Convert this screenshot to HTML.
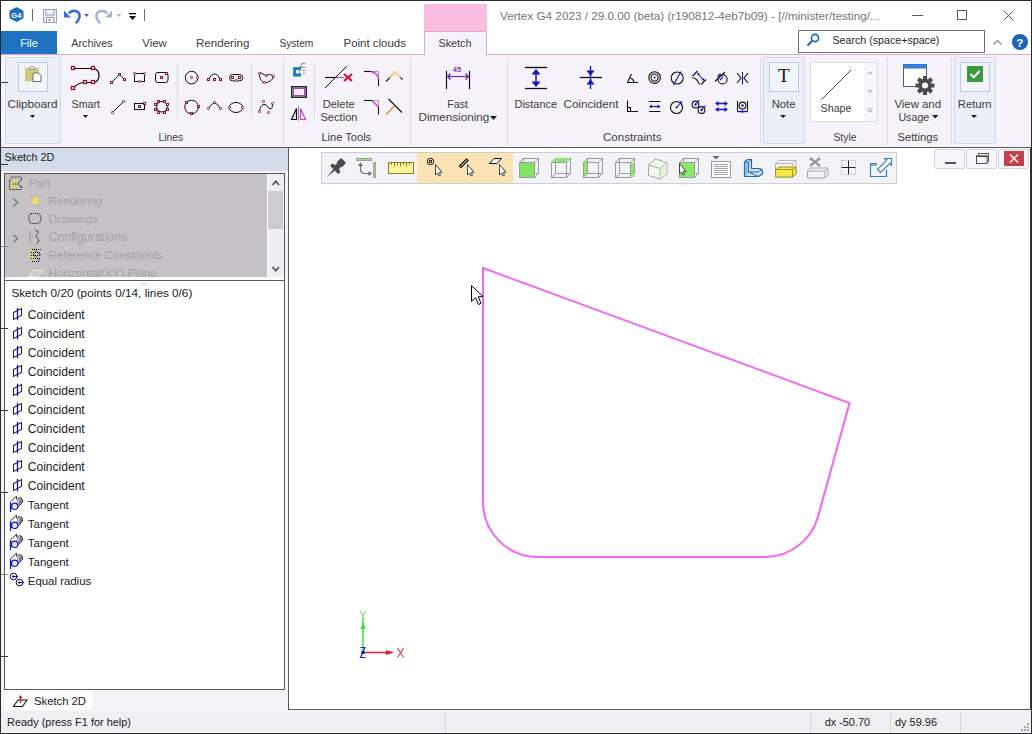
<!DOCTYPE html>
<html><head><meta charset="utf-8">
<style>
*{margin:0;padding:0;box-sizing:border-box}
html,body{width:1032px;height:734px;overflow:hidden;background:#fff}
body{position:relative;font-family:"Liberation Sans",sans-serif;font-size:12px;color:#3c3c3c}
.a{position:absolute}
.t{position:absolute;white-space:nowrap;line-height:1}
svg.i{position:absolute;left:0;top:0;overflow:visible}
.bp{display:inline-block;width:0;height:0}
</style></head><body>
<div class="a" style="left:0px;top:0px;width:1032px;height:734px;border:1px solid #2a2a2e;background:#fff"></div>
<div class="a" style="left:424px;top:4px;width:63px;height:27px;background:#f8bde0"></div>
<div class="a" style="left:1px;top:31px;width:56px;height:23px;background:#1f72c1"></div>
<div class="a" style="left:1px;top:54px;width:1030px;height:1px;background:#e3a5cb"></div>
<div class="a" style="left:424px;top:31px;width:63px;height:24px;background:#f5f3f9;border:1px solid #e3a5cb;border-bottom:none"></div>
<div class="a" style="left:1px;top:55px;width:1030px;height:92px;background:#f5f3f9"></div>
<div class="a" style="left:1px;top:147px;width:1030px;height:1px;background:#58565c"></div>
<div class="a" style="left:798px;top:30px;width:187px;height:23px;background:#fff;border:1px solid #6e6c72"></div>
<div class="a" style="left:5px;top:57px;width:56px;height:87px;background:#eceef8;border:1px solid #cfdaee"></div>
<div class="a" style="left:18px;top:62px;width:30px;height:30px;background:#f2f4fb;border:1px solid #b9cbe8"></div>
<div class="a" style="left:763px;top:57px;width:42px;height:87px;background:#eceef8;border:1px solid #cfdaee"></div>
<div class="a" style="left:769px;top:62px;width:30px;height:30px;background:#f2f4fb;border:1px solid #b9cbe8"></div>
<div class="a" style="left:954px;top:57px;width:42px;height:87px;background:#eceef8;border:1px solid #cfdaee"></div>
<div class="a" style="left:960px;top:62px;width:30px;height:30px;background:#f2f4fb;border:1px solid #b9cbe8"></div>
<div class="a" style="left:810px;top:62px;width:68px;height:60px;background:#f7f6fa;border:1px solid #dcdbe2"></div>
<div class="a" style="left:811px;top:63px;width:53px;height:58px;background:#fff"></div>
<div class="a" style="left:1px;top:148px;width:287px;height:562px;background:#f3f2f6"></div>
<div class="a" style="left:1px;top:148px;width:287px;height:23px;background:#d4dcea"></div>
<div class="a" style="left:4px;top:173px;width:281px;height:107px;border:1px solid #5a585e;border-bottom:none;background:#fff"></div>
<div class="a" style="left:5px;top:174px;width:262px;height:103px;background:#c4c2c5"></div>
<div class="a" style="left:268px;top:174px;width:16px;height:103px;background:#efeef1"></div>
<div class="a" style="left:268px;top:191px;width:15px;height:38px;background:#cdcbcf"></div>
<div class="a" style="left:4px;top:280px;width:281px;height:410px;border:1px solid #5a585e;background:#fff"></div>
<div class="a" style="left:5px;top:690px;width:87px;height:20px;background:#fff"></div>
<div class="a" style="left:288px;top:148px;width:743px;height:562px;border-left:1px solid #58565c;border-bottom:1px solid #58565c;border-right:1px solid #3a3a3e;background:#fff"></div>
<div class="a" style="left:321px;top:152px;width:576px;height:32px;background:#f3f2f6;border:1px solid #cfced3"></div>
<div class="a" style="left:417px;top:153px;width:96px;height:30px;background:#fbe3b6"></div>
<div class="a" style="left:934px;top:149px;width:31px;height:20px;background:#f6f5f9;border:1px solid #d6d5da;border-radius:2px"></div>
<div class="a" style="left:966px;top:149px;width:31px;height:20px;background:#f6f5f9;border:1px solid #d6d5da;border-radius:2px"></div>
<div class="a" style="left:998px;top:149px;width:31px;height:20px;background:#f6f5f9;border:1px solid #d6d5da;border-radius:2px"></div>
<div class="a" style="left:1004px;top:151px;width:20px;height:15px;background:#c4404f"></div>
<div class="a" style="left:1px;top:710px;width:1030px;height:23px;background:#f0eff2;border-top:1px solid #f6f5f8;border-bottom:1px solid #fbfafd"></div>
<div class="a" style="left:445px;top:712px;width:1px;height:20px;background:#d6d5da"></div>
<div class="a" style="left:810px;top:712px;width:1px;height:20px;background:#d6d5da"></div>
<div class="a" style="left:890px;top:712px;width:1px;height:20px;background:#d6d5da"></div>
<div class="a" style="left:960px;top:712px;width:1px;height:20px;background:#d6d5da"></div>
<div class="t" style="left:500.00px;top:10.006px;font-size:11.73px;color:#75737a;">Vertex G4 2023 / 29.0.00 (beta) (r190812-4eb7b09) - [//minister/testing/...</div>
<div class="t" style="left:20.20px;top:38.014px;font-size:10.92px;color:#ffffff;">File</div>
<div class="t" style="left:71.30px;top:38.002px;font-size:10.77px;color:#3c3c3c;">Archives</div>
<div class="t" style="left:142.30px;top:38.002px;font-size:11.40px;color:#3c3c3c;">View</div>
<div class="t" style="left:196.00px;top:38.010px;font-size:11.57px;color:#3c3c3c;">Rendering</div>
<div class="t" style="left:279.40px;top:39.003px;font-size:10.20px;color:#3c3c3c;">System</div>
<div class="t" style="left:343.50px;top:38.001px;font-size:11.47px;color:#3c3c3c;">Point clouds</div>
<div class="t" style="left:438.50px;top:38.013px;font-size:10.79px;color:#3c3c3c;">Sketch</div>
<div class="t" style="left:832.50px;top:35.014px;font-size:10.66px;color:#2a2a2a;">Search (space+space)</div>
<div class="t" style="left:7.50px;top:98.012px;font-size:11.68px;color:#3c3c3c;">Clipboard</div>
<div class="t" style="left:71.50px;top:99.011px;font-size:10.69px;color:#3c3c3c;">Smart</div>
<div class="t" style="left:158.60px;top:133.003px;font-size:10.29px;color:#3c3c3c;">Lines</div>
<div class="t" style="left:322.70px;top:99.014px;font-size:11.07px;color:#3c3c3c;">Delete</div>
<div class="t" style="left:320.40px;top:112.007px;font-size:11.15px;color:#3c3c3c;">Section</div>
<div class="t" style="left:321.40px;top:132.001px;font-size:11.10px;color:#3c3c3c;">Line Tools</div>
<div class="t" style="left:447.30px;top:99.000px;font-size:10.64px;color:#3c3c3c;">Fast</div>
<div class="t" style="left:418.50px;top:111.008px;font-size:11.69px;color:#3c3c3c;">Dimensioning</div>
<div class="t" style="left:514.50px;top:99.007px;font-size:10.95px;color:#3c3c3c;">Distance</div>
<div class="t" style="left:563.50px;top:98.000px;font-size:11.64px;color:#3c3c3c;">Coincident</div>
<div class="t" style="left:603.00px;top:132.001px;font-size:11.55px;color:#3c3c3c;">Constraints</div>
<div class="t" style="left:771.70px;top:99.003px;font-size:11.27px;color:#3c3c3c;">Note</div>
<div class="t" style="left:820.60px;top:103.011px;font-size:10.69px;color:#3c3c3c;">Shape</div>
<div class="t" style="left:833.40px;top:133.012px;font-size:10.39px;color:#3c3c3c;">Style</div>
<div class="t" style="left:894.40px;top:99.014px;font-size:11.40px;color:#3c3c3c;">View and</div>
<div class="t" style="left:898.40px;top:112.008px;font-size:10.69px;color:#3c3c3c;">Usage</div>
<div class="t" style="left:897.40px;top:132.014px;font-size:11.29px;color:#3c3c3c;">Settings</div>
<div class="t" style="left:957.80px;top:99.006px;font-size:11.23px;color:#3c3c3c;">Return</div>
<div class="t" style="left:4.60px;top:152.003px;font-size:10.75px;color:#1a1a1a;">Sketch 2D</div>
<div class="a" style="left:0;top:0;width:1032px;height:734px;clip-path:inset(174px 765px 457px 5px)">
<div class="t" style="left:29.20px;top:178.005px;font-size:11.45px;color:#a3a1a6;">Part</div>
<div class="t" style="left:48.60px;top:195.010px;font-size:11.70px;color:#a3a1a6;">Rendering</div>
<div class="t" style="left:48.60px;top:213.011px;font-size:11.76px;color:#a3a1a6;">Drawings</div>
<div class="t" style="left:48.60px;top:231.001px;font-size:12.17px;color:#a3a1a6;">Configurations</div>
<div class="t" style="left:48.60px;top:250.014px;font-size:11.46px;color:#a3a1a6;">Reference Constraints</div>
<div class="t" style="left:48.60px;top:267.002px;font-size:11.62px;color:#a3a1a6;">Horizontal(XY) Plane</div>
</div>
<div class="t" style="left:11.40px;top:287.012px;font-size:11.75px;color:#1a1a1a;">Sketch 0/20 (points 0/14, lines 0/6)</div>
<div class="t" style="left:27.80px;top:309.001px;font-size:12.06px;color:#1a1a1a;">Coincident</div>
<div class="t" style="left:27.80px;top:328.001px;font-size:12.06px;color:#1a1a1a;">Coincident</div>
<div class="t" style="left:27.80px;top:347.001px;font-size:12.06px;color:#1a1a1a;">Coincident</div>
<div class="t" style="left:27.80px;top:366.001px;font-size:12.06px;color:#1a1a1a;">Coincident</div>
<div class="t" style="left:27.80px;top:385.001px;font-size:12.06px;color:#1a1a1a;">Coincident</div>
<div class="t" style="left:27.80px;top:404.001px;font-size:12.06px;color:#1a1a1a;">Coincident</div>
<div class="t" style="left:27.80px;top:423.001px;font-size:12.06px;color:#1a1a1a;">Coincident</div>
<div class="t" style="left:27.80px;top:442.001px;font-size:12.06px;color:#1a1a1a;">Coincident</div>
<div class="t" style="left:27.80px;top:461.001px;font-size:12.06px;color:#1a1a1a;">Coincident</div>
<div class="t" style="left:27.80px;top:480.001px;font-size:12.06px;color:#1a1a1a;">Coincident</div>
<div class="t" style="left:27.80px;top:500.007px;font-size:11.52px;color:#1a1a1a;">Tangent</div>
<div class="t" style="left:27.80px;top:519.007px;font-size:11.52px;color:#1a1a1a;">Tangent</div>
<div class="t" style="left:27.80px;top:538.007px;font-size:11.52px;color:#1a1a1a;">Tangent</div>
<div class="t" style="left:27.80px;top:557.007px;font-size:11.52px;color:#1a1a1a;">Tangent</div>
<div class="t" style="left:27.80px;top:576.013px;font-size:11.42px;color:#1a1a1a;">Equal radius</div>
<div class="t" style="left:34.00px;top:696.015px;font-size:11.27px;color:#1a1a1a;">Sketch 2D</div>
<div class="t" style="left:7.00px;top:717.002px;font-size:10.94px;color:#1a1a1a;">Ready (press F1 for help)</div>
<div class="t" style="left:824.70px;top:717.001px;font-size:10.86px;color:#1a1a1a;">dx -50.70</div>
<div class="t" style="left:895.00px;top:717.009px;font-size:10.95px;color:#1a1a1a;">dy 59.96</div>
<svg class="i" width="1032" height="734" viewBox="0 0 1032 734"><!-- ===== title bar ===== -->
<path d="M16.5 7 L23.5 10.8 L23.5 18.2 L16.5 22 L9.5 18.2 L9.5 10.8 Z" fill="#1f6fb8"/>
<text x="11.3" y="18.2" font-family="Liberation Sans" font-weight="bold" font-size="7.5" fill="#fff">G4</text>
<line x1="32.5" y1="9" x2="32.5" y2="21" stroke="#6a6a6a" stroke-width="1"/>
<!-- save -->
<rect x="43.5" y="9.5" width="13" height="13" fill="#e8edf8" stroke="#9aa2b4" stroke-width="1"/>
<rect x="46" y="9.5" width="8" height="5.5" fill="#eef2fb" stroke="#9aa2b4" stroke-width="1"/>
<rect x="46.5" y="17.5" width="7" height="5" fill="#fff" stroke="#9aa2b4" stroke-width="1"/>
<rect x="48.5" y="19" width="2" height="2" fill="#8a94a8"/>
<!-- undo -->
<path d="M69 13.5 C72 9.5 80 10 79.5 16.5 C79.2 20 77 22 75.5 23" fill="none" stroke="#3a70d8" stroke-width="2.6"/>
<path d="M64 10.5 L64 17.5 L71 17.5 Z" fill="#3a70d8"/>
<path d="M84 14 L89 14 L86.5 17 Z" fill="#56647e"/>
<!-- redo -->
<path d="M107 13.5 C104 9.5 96 10 96.5 16.5 C96.8 20 99 22 100.5 23" fill="none" stroke="#a9b6d2" stroke-width="2.6"/>
<path d="M112 10.5 L112 17.5 L105 17.5 Z" fill="#a9b6d2"/>
<path d="M116.5 14 L121.5 14 L119 17 Z" fill="#b8b8bc"/>
<!-- customize -->
<rect x="129" y="13" width="7" height="1.3" fill="#000"/>
<path d="M129 16 L136 16 L132.5 20 Z" fill="#000"/>
<line x1="144.5" y1="9" x2="144.5" y2="21" stroke="#6a6a6a" stroke-width="1"/>

<!-- window controls -->
<line x1="912" y1="15.5" x2="923" y2="15.5" stroke="#5a5a5a" stroke-width="1"/>
<rect x="957.5" y="10.5" width="9" height="9" fill="none" stroke="#5a5a5a" stroke-width="1"/>
<path d="M1003.5 10.5 L1013.5 20.5 M1013.5 10.5 L1003.5 20.5" stroke="#5a5a5a" stroke-width="1"/>

<!-- search icon -->
<circle cx="815" cy="38" r="3.6" fill="none" stroke="#2060b0" stroke-width="1.6"/>
<line x1="812.3" y1="40.7" x2="807.5" y2="45.5" stroke="#2060b0" stroke-width="2"/>
<!-- collapse chevron -->
<path d="M993.5 44.5 L997.5 40.5 L1001.5 44.5" fill="none" stroke="#8a8a8e" stroke-width="1.2"/>
<!-- help -->
<circle cx="1020" cy="42" r="8" fill="#1d64b8"/>
<text x="1016.3" y="46.6" font-family="Liberation Sans" font-weight="bold" font-size="11.5" fill="#fff">?</text>

<!-- ===== ribbon separators ===== -->
<g stroke="#dcdae2" stroke-width="1">
<line x1="283.5" y1="58" x2="283.5" y2="145"/>
<line x1="410.5" y1="58" x2="410.5" y2="145"/>
<line x1="507.5" y1="58" x2="507.5" y2="145"/>
<line x1="760.5" y1="58" x2="760.5" y2="145"/>
<line x1="887.5" y1="58" x2="887.5" y2="145"/>
<line x1="951.5" y1="58" x2="951.5" y2="145"/>
<line x1="177.5" y1="64" x2="177.5" y2="119"/>
<line x1="251.5" y1="64" x2="251.5" y2="119"/>
<line x1="314.5" y1="64" x2="314.5" y2="119"/>
</g>

<!-- dropdown arrows -->
<g fill="#1a1a1a">
<path d="M30 115 L35 115 L32.5 118 Z"/>
<path d="M83 115 L88 115 L85.5 118 Z"/>
<path d="M490 116 L497 116 L493.5 120 Z"/>
<path d="M780 115 L786 115 L783 118 Z"/>
<path d="M932 115 L938.5 115 L935.25 118.5 Z"/>
<path d="M971 115 L977 115 L974 118 Z"/>
</g>

<!-- clipboard icon -->
<rect x="25" y="68" width="14" height="13.5" fill="#cfc97a"/>
<path d="M29.5 69.5 L29.5 67.5 Q32 65.5 34.5 67.5 L34.5 69.5 Z" fill="#fff" stroke="#808080" stroke-width="0.9"/>
<path d="M33 73 L38.5 73 L41 75.5 L41 81.5 L33 81.5 Z" fill="#fff" stroke="#6e6e6e" stroke-width="1"/>

<!-- smart icon -->
<g fill="none" stroke="#000" stroke-width="1.2">
<path d="M73 68.5 L93 68.5 C101 68.5 101 82.5 93 82.5 L85 82.5 C80 82.5 77 84 73 88"/>
</g>
<g fill="#fff" stroke="#8a1424" stroke-width="1.3">
<rect x="71.5" y="66.5" width="3" height="3"/>
<rect x="91.5" y="66.5" width="3" height="3"/>
<rect x="83.5" y="80.5" width="3" height="3"/>
<rect x="91.5" y="80.5" width="3" height="3"/>
<rect x="71.5" y="86.5" width="3" height="3"/>
</g>

<!-- Lines icons -->
<g fill="none" stroke="#111" stroke-width="1">
<path d="M111.5 82.5 L119.5 74.5 L124.5 79.5"/>
<rect x="134.5" y="73.5" width="10" height="8"/>
<rect x="155.5" y="72.5" width="12.5" height="10" rx="2.5"/>
<line x1="112.5" y1="112.5" x2="123.5" y2="101.5"/>
<rect x="134.5" y="103.5" width="10" height="6"/>
<circle cx="162" cy="106.7" r="5.3"/>
<circle cx="191.6" cy="77.6" r="6.3"/>
<path d="M208.5 79.5 Q214.5 68 220.5 79.5"/>
<rect x="229.5" y="74.5" width="13.3" height="6.3" rx="3.1"/>
<path d="M259.5 73 C262 72 264 76 266.5 75.5 C269 74 272 74 273 77 C273 80 268 83 264.5 82.5 C261 82 259 77 259.5 73 Z"/>
<circle cx="191.6" cy="107" r="6.8"/>
<path d="M208.5 108.5 Q214.5 97.5 220.5 108.5"/>
<ellipse cx="236" cy="107.5" rx="6.8" ry="5"/>
<path d="M259.5 111.5 C260 107 262 104 265 104.5 C268 105 268 109 270 109 C272 109 273 106 272.5 103.5"/>
</g>
<g fill="#fff" stroke="#8a1424" stroke-width="1">
<rect x="110.5" y="81.5" width="2" height="2"/>
<rect x="118.5" y="73.5" width="2" height="2"/>
<rect x="123.5" y="78.5" width="2" height="2"/>
<rect x="160.5" y="76.5" width="2" height="2"/>
<rect x="165.5" y="72.5" width="2" height="2"/>
<rect x="138.5" y="105.5" width="2" height="2"/>
<rect x="143.5" y="102.5" width="2" height="2"/>
<rect x="157.5" y="100.5" width="2" height="2"/>
<rect x="163.5" y="100.5" width="2" height="2"/>
<rect x="166.5" y="103.5" width="2" height="2"/>
<rect x="166.5" y="108.5" width="2" height="2"/>
<rect x="163.5" y="111.5" width="2" height="2"/>
<rect x="157.5" y="111.5" width="2" height="2"/>
<rect x="154.5" y="108.5" width="2" height="2"/>
<rect x="154.5" y="103.5" width="2" height="2"/>
<rect x="207.5" y="78.5" width="2" height="2"/>
<rect x="213.5" y="78.5" width="2" height="2"/>
<rect x="219.5" y="78.5" width="2" height="2"/>
<rect x="231.5" y="76.5" width="2" height="2"/>
<rect x="238.5" y="76.5" width="2" height="2"/>
<rect x="185.5" y="101.5" width="2" height="2"/>
<rect x="197.5" y="105.5" width="2" height="2"/>
<rect x="190.5" y="112.5" width="2" height="2"/>
<rect x="133.5" y="72.5" width="2" height="2" rx="0.8"/>
<rect x="143.5" y="72.5" width="2" height="2" rx="0.8"/>
<rect x="138.5" y="80.5" width="2" height="2" rx="0.8"/>
<rect x="111.5" y="111.5" width="2" height="2" rx="0.8"/>
<rect x="122.5" y="100.5" width="2" height="2" rx="0.8"/>
<rect x="190.5" y="76.5" width="2" height="2" rx="0.8"/>
<rect x="196.5" y="76.5" width="2" height="2" rx="0.8"/>
<rect x="235.5" y="79.5" width="2" height="2" rx="0.8"/>
<rect x="258.5" y="72.5" width="2" height="2" rx="0.8"/>
<rect x="265.5" y="74.5" width="2" height="2" rx="0.8"/>
<rect x="272.5" y="75.5" width="2" height="2" rx="0.8"/>
<rect x="263.5" y="81.5" width="2" height="2" rx="0.8"/>
<rect x="207.5" y="107.5" width="2" height="2" rx="0.8"/>
<rect x="213.5" y="101.5" width="2" height="2" rx="0.8"/>
<rect x="219.5" y="107.5" width="2" height="2" rx="0.8"/>
<rect x="228.5" y="106.5" width="2" height="2" rx="0.8"/>
<rect x="241.5" y="106.5" width="2" height="2" rx="0.8"/>
<rect x="258.5" y="110.5" width="2" height="2" rx="0.8"/>
<rect x="262.5" y="100.5" width="2" height="2" rx="0.8"/>
<rect x="267.5" y="111.5" width="2" height="2" rx="0.8"/>
<rect x="271.5" y="102.5" width="2" height="2" rx="0.8"/>
</g>
<!-- ===== Line Tools ===== -->
<!-- offset icon -->
<g fill="none" stroke="#9a9aa0" stroke-width="1">
<path d="M299.5 73.5 L299.5 66.5 L301.5 66.5 L301.5 63.5 L305.5 63.5"/>
<path d="M301.5 70.5 L305.5 70.5 M301.5 67.5 L305.5 67.5 M302.5 73.5 L305.5 73.5"/>
</g>
<path d="M301 68.5 L294.5 68.5 L294.5 75 L301 75" fill="none" stroke="#1e7ad0" stroke-width="3"/>
<path d="M302 67.5 L293.5 67.5 L293.5 76.5 L302 76.5" fill="none" stroke="#4ad04a" stroke-width="0.8" stroke-dasharray="1 1"/>
<!-- rect offset -->
<rect x="291.8" y="86.8" width="14.4" height="10.4" fill="none" stroke="#111" stroke-width="1.4"/>
<rect x="293.5" y="88.5" width="11" height="7" fill="none" stroke="#b040c8" stroke-width="1"/>
<!-- mirror -->
<path d="M296.5 108.5 L296.5 119.5 L291.5 119.5 Z" fill="none" stroke="#111" stroke-width="1.2"/>
<line x1="298.5" y1="106" x2="298.5" y2="121" stroke="#8a8a8a" stroke-width="1"/>
<path d="M300.5 108.5 L300.5 119.5 L305.5 119.5 Z" fill="none" stroke="#c040d0" stroke-width="1.2"/>
<!-- delete section -->
<line x1="325" y1="88" x2="347" y2="66" stroke="#111" stroke-width="1"/>
<line x1="325" y1="77.5" x2="336" y2="77.5" stroke="#111" stroke-width="1.2"/>
<line x1="336" y1="77.5" x2="344" y2="77.5" stroke="#a050c8" stroke-width="1"/>
<path d="M344 74 L352 81 M352 74 L344 81" stroke="#d01030" stroke-width="2.2"/>
<!-- fillet row1 -->
<path d="M371.5 71.5 L378.5 71.5 L378.5 79" fill="none" stroke="#a0a0a0" stroke-width="1"/>
<line x1="364" y1="71.5" x2="371" y2="71.5" stroke="#111" stroke-width="1.1"/>
<path d="M371 71.5 Q377.5 73 378.5 78.5" fill="none" stroke="#c040d8" stroke-width="1.4"/>
<line x1="378.5" y1="79" x2="378.5" y2="86" stroke="#111" stroke-width="1.1"/>
<!-- chamfer row1 -->
<path d="M386 81.5 L391 76.5 M399.5 76.5 L402.5 79.5" stroke="#111" stroke-width="1.1"/>
<path d="M389.5 77.5 L395 72 L400.5 77.5" fill="none" stroke="#f0c070" stroke-width="2.2"/>
<path d="M389.5 77.5 L395 72 L400.5 77.5" fill="none" stroke="#fff0c8" stroke-width="0.6"/>
<!-- fillet row2 -->
<path d="M372 100.5 L378.5 100.5 L378.5 107" fill="none" stroke="#a0a0a0" stroke-width="1"/>
<line x1="364" y1="100.5" x2="372" y2="100.5" stroke="#111" stroke-width="1.1"/>
<line x1="372" y1="100.5" x2="378.5" y2="107" stroke="#c040d8" stroke-width="1.4"/>
<line x1="378.5" y1="107" x2="378.5" y2="114.5" stroke="#111" stroke-width="1.1"/>
<!-- trim row2 -->
<line x1="388.5" y1="99" x2="402" y2="112.5" stroke="#111" stroke-width="1.1"/>
<line x1="386" y1="114.5" x2="394.5" y2="106" stroke="#f0c070" stroke-width="2.2"/>
<line x1="386" y1="114.5" x2="394.5" y2="106" stroke="#111" stroke-width="0.5" opacity="0.6"/>

<!-- ===== Fast dimensioning ===== -->
<line x1="446.5" y1="71" x2="446.5" y2="89" stroke="#111" stroke-width="1.2"/>
<line x1="469.5" y1="71" x2="469.5" y2="89" stroke="#111" stroke-width="1.2"/>
<line x1="448" y1="76.5" x2="468" y2="76.5" stroke="#6a2aa8" stroke-width="1.2"/>
<path d="M450.5 73.5 L447.8 76.5 L450.5 79.5 M465.5 73.5 L468.2 76.5 L465.5 79.5" fill="none" stroke="#6a2aa8" stroke-width="1.5"/>
<text x="452.8" y="72.2" font-family="Liberation Sans" font-weight="bold" font-size="7.6" fill="#8a38b8">45</text>

<!-- ===== Constraints big ===== -->
<g stroke="#111" stroke-width="1.3">
<line x1="525" y1="67.5" x2="547" y2="67.5"/>
<line x1="525" y1="88.5" x2="547" y2="88.5"/>
<line x1="580" y1="77.5" x2="602" y2="77.5"/>
</g>
<line x1="536" y1="70" x2="536" y2="86" stroke="#1616c0" stroke-width="1.5"/>
<path d="M531.5 74.5 L536 69 L540.5 74.5 Z M531.5 81.5 L536 87 L540.5 81.5 Z" fill="#1616c0"/>
<line x1="590.5" y1="66" x2="590.5" y2="89" stroke="#1616c0" stroke-width="1.4"/>
<path d="M586.5 70.5 L590.5 76 L594.5 70.5 Z M586.5 84.5 L590.5 79 L594.5 84.5 Z" fill="#1616c0"/>

<!-- ===== constraints small icons ===== -->
<g fill="none" stroke="#111" stroke-width="1.1">
<!-- angle -->
<path d="M627 82.5 L638 82.5 M627.5 82.5 L631.5 74"/>
<path d="M630.5 78 Q633.5 79 634 82.5"/>
<!-- concentric -->
<circle cx="654.6" cy="77.6" r="5.8"/>
<circle cx="654.6" cy="77.6" r="3.6"/>
<!-- circle diag -->
<circle cx="677.2" cy="78" r="6"/>
<!-- curve band -->
<path d="M692.5 76 L697.5 71 M701 84.5 L706 79.5"/>
<path d="M692 77.5 Q697 78 699.5 84.5"/>
<!-- circle slash -->
<circle cx="722.6" cy="79.4" r="4.5"/>
<line x1="715" y1="81.5" x2="725" y2="72"/>
<!-- symmetric -->
<path d="M737 73 L741 78 L737 83 M748 73 L744 78 L748 83"/>
<!-- perpendicular -->
<path d="M627.5 100.5 L627.5 111.5 L638 111.5 M627.5 107.5 L630.5 107.5 L630.5 111.5"/>
<!-- parallel -->
<path d="M649 101.5 L660.5 101.5 M649 111.5 L660.5 111.5"/>
<!-- radius -->
<circle cx="676.5" cy="107.5" r="6"/>
<!-- equal circles -->
<circle cx="695.5" cy="104.5" r="3.4"/>
<circle cx="701.5" cy="110" r="3.4"/>
<!-- box circle -->
<path d="M737.5 101 L737.5 110.5 M747.5 101 L747.5 110.5"/>
<circle cx="742.5" cy="105.5" r="3.4"/>
</g>
<g fill="none" stroke="#1616c0" stroke-width="1.1">
<line x1="673.5" y1="85" x2="681" y2="71.5"/>
<path d="M698 74 L703 79.5"/>
<path d="M717.5 76.5 L720.5 73.5 M720 80 L723 77"/>
<line x1="742.5" y1="72" x2="742.5" y2="84.5"/>
<path d="M651 106.5 L658.5 106.5"/>
<line x1="676.5" y1="107.5" x2="681.5" y2="102"/>
<path d="M695.5 104.5 L699.5 100 M701.5 110 L705.5 105.5"/>
<path d="M717 103.5 L726 103.5 M717 109.5 L726 109.5" stroke-width="1.5"/>
<path d="M737 111.5 L748 111.5" stroke-width="1.4"/>
</g>
<g fill="#1616c0">
<circle cx="654.6" cy="77.6" r="1"/>
<path d="M649 106.5 L652 104.5 L652 108.5 Z M660.5 106.5 L657.5 104.5 L657.5 108.5 Z"/>
<circle cx="676.5" cy="107.5" r="1.1"/>
<path d="M682.5 101 L679.5 102 L681.5 104 Z"/>
<circle cx="695.5" cy="104.5" r="1.2"/>
<circle cx="701.5" cy="110" r="1.2"/>
<path d="M715 103.5 L718.5 101 L718.5 106 Z M728 103.5 L724.5 101 L724.5 106 Z M715 109.5 L718.5 107 L718.5 112 Z M728 109.5 L724.5 107 L724.5 112 Z"/>
<circle cx="742.5" cy="105.5" r="1.2"/>
<rect x="742" y="110" width="1" height="3"/>
<path d="M697 72.5 L700 73.5 L698 75.5 Z M704.5 81 L701.5 80 L703.5 78 Z"/>
</g>
<!-- ===== Note ===== -->
<text x="778" y="82" font-family="Liberation Serif" font-size="19" fill="#111">T</text>
<!-- style gallery -->
<line x1="821.5" y1="99.5" x2="851" y2="70" stroke="#555" stroke-width="1"/>
<path d="M867 74 L873 74 L870 71 Z M867 90 L873 90 L870 93 Z" fill="#c0bec6"/>
<path d="M867 110 L873 110 L870 113 Z" fill="#c0bec6"/>
<line x1="867" y1="108.5" x2="873" y2="108.5" stroke="#c0bec6" stroke-width="1"/>

<!-- ===== View and usage ===== -->
<rect x="903.5" y="64.5" width="23" height="22" fill="#fff" stroke="#5a5a60" stroke-width="1"/>
<rect x="903" y="64" width="24" height="4.5" fill="#2a78d0"/>
<path d="M904 66.2 H926" stroke="#9cc4f0" stroke-width="0.7" stroke-dasharray="1 1"/>
<g transform="translate(925 85.5)">
<circle r="6.8" fill="#4a4a50"/>
<g fill="#4a4a50">
<rect x="-2" y="-9.5" width="4" height="19"/>
<rect x="-2" y="-9.5" width="4" height="19" transform="rotate(45)"/>
<rect x="-2" y="-9.5" width="4" height="19" transform="rotate(90)"/>
<rect x="-2" y="-9.5" width="4" height="19" transform="rotate(135)"/>
</g>
<circle r="3" fill="#fff"/>
</g>

<!-- ===== Return ===== -->
<rect x="967" y="66" width="16" height="16" fill="#3f9a3f"/>
<path d="M970.5 74 L973.8 77.3 L979.5 71" fill="none" stroke="#fff" stroke-width="2"/>
<!-- scrollbar chevrons -->
<path d="M272.5 185 L275.75 181.2 L279 185" fill="none" stroke="#4a4a50" stroke-width="1.6"/>
<path d="M272.5 267 L275.75 270.8 L279 267" fill="none" stroke="#4a4a50" stroke-width="1.6"/>
<!-- splitter indicator -->
<path d="M141 282.5 L144.5 285 L148 282.5" fill="none" stroke="#b8b8bc" stroke-width="0.8"/>
<!-- tree chevrons -->
<path d="M13.5 198.8 L17.5 202.5 L13.5 206.2" fill="none" stroke="#7c7a80" stroke-width="1.5"/>
<path d="M13.5 234.8 L17.5 238.5 L13.5 242.2" fill="none" stroke="#7c7a80" stroke-width="1.5"/>
<!-- Part icon -->
<path d="M11 180 L11 189 L20 189 L16 184.5 L20 180 Z" fill="#d4d07a"/>
<path d="M9.5 181 L12 177 L20.5 177 L22 179 L17.5 184 L22 187 L20.5 189.5 L9.5 189.5 Z M13 184 L16 184" fill="none" stroke="#111" stroke-width="1.1" stroke-dasharray="1 1"/>
<!-- Rendering sun -->
<circle cx="35.5" cy="201" r="4" fill="#e4e070"/>
<g stroke="#d88aa0" stroke-width="1.1" stroke-dasharray="1 1">
<path d="M35.5 194 V198 M35.5 204 V208 M28.5 201 H32 M39 201 H42.5 M30.5 196 L33 198.5 M38 203.5 L40.5 206 M40.5 196 L38 198.5 M33 203.5 L30.5 206"/>
</g>
<!-- Drawings -->
<path d="M31 213.5 L38 213.5 L40.8 216.5 L40.8 221 L38 223.5 L31 223.5 L29 221 L29 216 Z" fill="none" stroke="#111" stroke-width="1.1" stroke-dasharray="1 1"/>
<!-- Configurations -->
<g fill="none" stroke-width="1.1" stroke-dasharray="1 1">
<path d="M30 230.5 V244 M30 237 H33" stroke="#7a7a80"/>
<path d="M35 230 L38.5 231.5 L36 236 L39 240 L37 244" stroke="#111"/>
</g>
<!-- Reference constraints -->
<path d="M30 254 L34 250 L34 261 L30 259 Z" fill="#d8d478"/>
<g fill="none" stroke="#111" stroke-width="1.1" stroke-dasharray="1 1">
<path d="M32 249.5 H41 M31 252.5 H41 M31 255.5 H41 M31 258.5 H41 M32 261.5 H40"/>
<path d="M34 249 L41 256 M33 254 L40 261"/>
</g>
<!-- Horizontal plane -->
<path d="M28.5 276.5 L33.5 270.5 L42 270.5 L37 276.5 Z" fill="none" stroke="#e8e8ea" stroke-width="1.1"/>
<path d="M31 276 L36 271 M34 276 L39 271" stroke="#e0e0e2" stroke-width="0.9"/>

<!-- list icons: coincident x10 -->
<g>
<path d="M13.5 312.5 L21.5 308.5 L21.5 315.5 L13.5 319.5 Z" fill="none" stroke="#222" stroke-width="1.05"/>
<line x1="17.5" y1="307.8" x2="17.5" y2="320.2" stroke="#1010c0" stroke-width="1.3"/>
</g>
<g transform="translate(0 19)">
<path d="M13.5 312.5 L21.5 308.5 L21.5 315.5 L13.5 319.5 Z" fill="none" stroke="#222" stroke-width="1.05"/>
<line x1="17.5" y1="307.8" x2="17.5" y2="320.2" stroke="#1010c0" stroke-width="1.3"/>
</g><g transform="translate(0 38)">
<path d="M13.5 312.5 L21.5 308.5 L21.5 315.5 L13.5 319.5 Z" fill="none" stroke="#222" stroke-width="1.05"/>
<line x1="17.5" y1="307.8" x2="17.5" y2="320.2" stroke="#1010c0" stroke-width="1.3"/>
</g><g transform="translate(0 57)">
<path d="M13.5 312.5 L21.5 308.5 L21.5 315.5 L13.5 319.5 Z" fill="none" stroke="#222" stroke-width="1.05"/>
<line x1="17.5" y1="307.8" x2="17.5" y2="320.2" stroke="#1010c0" stroke-width="1.3"/>
</g><g transform="translate(0 76)">
<path d="M13.5 312.5 L21.5 308.5 L21.5 315.5 L13.5 319.5 Z" fill="none" stroke="#222" stroke-width="1.05"/>
<line x1="17.5" y1="307.8" x2="17.5" y2="320.2" stroke="#1010c0" stroke-width="1.3"/>
</g>
<g transform="translate(0 95)">
<path d="M13.5 312.5 L21.5 308.5 L21.5 315.5 L13.5 319.5 Z" fill="none" stroke="#222" stroke-width="1.05"/>
<line x1="17.5" y1="307.8" x2="17.5" y2="320.2" stroke="#1010c0" stroke-width="1.3"/>
</g><g transform="translate(0 114)">
<path d="M13.5 312.5 L21.5 308.5 L21.5 315.5 L13.5 319.5 Z" fill="none" stroke="#222" stroke-width="1.05"/>
<line x1="17.5" y1="307.8" x2="17.5" y2="320.2" stroke="#1010c0" stroke-width="1.3"/>
</g><g transform="translate(0 133)">
<path d="M13.5 312.5 L21.5 308.5 L21.5 315.5 L13.5 319.5 Z" fill="none" stroke="#222" stroke-width="1.05"/>
<line x1="17.5" y1="307.8" x2="17.5" y2="320.2" stroke="#1010c0" stroke-width="1.3"/>
</g><g transform="translate(0 152)">
<path d="M13.5 312.5 L21.5 308.5 L21.5 315.5 L13.5 319.5 Z" fill="none" stroke="#222" stroke-width="1.05"/>
<line x1="17.5" y1="307.8" x2="17.5" y2="320.2" stroke="#1010c0" stroke-width="1.3"/>
</g><g transform="translate(0 171)">
<path d="M13.5 312.5 L21.5 308.5 L21.5 315.5 L13.5 319.5 Z" fill="none" stroke="#222" stroke-width="1.05"/>
<line x1="17.5" y1="307.8" x2="17.5" y2="320.2" stroke="#1010c0" stroke-width="1.3"/>
</g>
<!-- tangent x4 -->
<g>
<path d="M16.8 499.2 L21.5 498.5 L22.4 501.5 L18 506.2 L16.8 503 Z" fill="#b8b8bc"/>
<path d="M20 499 L22 500.5 L22 502 L18.5 505.5 Z" fill="#7a7a80"/>
<path d="M10.6 501.8 L16.4 496.2 L17 499.8 M17.8 498 H21.3 L22.6 500.3 V502.2 L18.3 506.8" fill="none" stroke="#222" stroke-width="1"/>
<circle cx="14.7" cy="506.3" r="3.2" fill="#e6eaf8" stroke="#1010d0" stroke-width="1.2"/>
<path d="M10.5 502 V512" stroke="#1010d0" stroke-width="1.2"/>
<path d="M10 504.5 H11.8 V509 H10 Z" fill="#1010d0"/>
</g>
<g transform="translate(0 19)">
<path d="M16.8 499.2 L21.5 498.5 L22.4 501.5 L18 506.2 L16.8 503 Z" fill="#b8b8bc"/>
<path d="M20 499 L22 500.5 L22 502 L18.5 505.5 Z" fill="#7a7a80"/>
<path d="M10.6 501.8 L16.4 496.2 L17 499.8 M17.8 498 H21.3 L22.6 500.3 V502.2 L18.3 506.8" fill="none" stroke="#222" stroke-width="1"/>
<circle cx="14.7" cy="506.3" r="3.2" fill="#e6eaf8" stroke="#1010d0" stroke-width="1.2"/>
<path d="M10.5 502 V512" stroke="#1010d0" stroke-width="1.2"/>
<path d="M10 504.5 H11.8 V509 H10 Z" fill="#1010d0"/>
</g><g transform="translate(0 38)">
<path d="M16.8 499.2 L21.5 498.5 L22.4 501.5 L18 506.2 L16.8 503 Z" fill="#b8b8bc"/>
<path d="M20 499 L22 500.5 L22 502 L18.5 505.5 Z" fill="#7a7a80"/>
<path d="M10.6 501.8 L16.4 496.2 L17 499.8 M17.8 498 H21.3 L22.6 500.3 V502.2 L18.3 506.8" fill="none" stroke="#222" stroke-width="1"/>
<circle cx="14.7" cy="506.3" r="3.2" fill="#e6eaf8" stroke="#1010d0" stroke-width="1.2"/>
<path d="M10.5 502 V512" stroke="#1010d0" stroke-width="1.2"/>
<path d="M10 504.5 H11.8 V509 H10 Z" fill="#1010d0"/>
</g><g transform="translate(0 57)">
<path d="M16.8 499.2 L21.5 498.5 L22.4 501.5 L18 506.2 L16.8 503 Z" fill="#b8b8bc"/>
<path d="M20 499 L22 500.5 L22 502 L18.5 505.5 Z" fill="#7a7a80"/>
<path d="M10.6 501.8 L16.4 496.2 L17 499.8 M17.8 498 H21.3 L22.6 500.3 V502.2 L18.3 506.8" fill="none" stroke="#222" stroke-width="1"/>
<circle cx="14.7" cy="506.3" r="3.2" fill="#e6eaf8" stroke="#1010d0" stroke-width="1.2"/>
<path d="M10.5 502 V512" stroke="#1010d0" stroke-width="1.2"/>
<path d="M10 504.5 H11.8 V509 H10 Z" fill="#1010d0"/>
</g>
<!-- equal radius -->
<circle cx="13.5" cy="576.5" r="3.3" fill="none" stroke="#111" stroke-width="1"/>
<circle cx="19.5" cy="582.5" r="3.3" fill="none" stroke="#111" stroke-width="1"/>
<path d="M12.5 576.5 H17 M18.5 582.5 H23" stroke="#1010d0" stroke-width="1.1"/>
<path d="M18.5 576.5 L16 574.7 L16 578.3 Z M24.5 582.5 L22 580.7 L22 584.3 Z M11.8 576.5 L13.3 575 L14.8 576.5 L13.3 578 Z M17.8 582.5 L19.3 581 L20.8 582.5 L19.3 584 Z" fill="#1010d0"/>
<!-- tab icon -->
<path d="M13.5 706.5 L18 700 L27 700 L22.5 706.5 Z" fill="none" stroke="#111" stroke-width="1.1"/>
<line x1="20.5" y1="703" x2="20.5" y2="697" stroke="#e01020" stroke-width="1.3"/>
<path d="M18.5 698 L20.5 695 L22.5 698 Z" fill="#e01020"/>
<!-- pin -->
<g transform="translate(334.8 169.2) rotate(45)" fill="#4a4850">
<rect x="-3.6" y="-12.5" width="7.2" height="6.5" rx="1.2"/>
<path d="M-2.6 -6.2 L2.6 -6.2 L3.2 -2.2 L-3.2 -2.2 Z"/>
<rect x="-5.8" y="-2.6" width="11.6" height="3.6" rx="0.8"/>
<path d="M-1 0.8 L1 0.8 L0 11.2 Z"/>
</g>
<!-- rotate icon -->
<rect x="356.5" y="158.5" width="15" height="2" fill="#8ce86a" stroke="#a0a0a6" stroke-width="1"/>
<rect x="373.5" y="162.5" width="2" height="15" fill="#8ce86a" stroke="#a0a0a6" stroke-width="1"/>
<path d="M360.5 165 L360.5 169 Q360.5 173.5 365 173.5 L369.5 173.5" fill="none" stroke="#6a6a70" stroke-width="1.2"/>
<path d="M358 166 L360.5 162.5 L363 166 Z M368.5 171 L372 173.5 L368.5 176 Z" fill="#6a6a70"/>
<!-- ruler -->
<rect x="388.5" y="162.5" width="25" height="11" fill="#fcf59a" stroke="#8a7a30" stroke-width="1"/>
<path d="M391.5 163 V165 M394.5 163 V166.5 M397.5 163 V165 M400.5 163 V166.5 M403.5 163 V165 M406.5 163 V166.5 M409.5 163 V165" stroke="#8a7a30" stroke-width="1"/>
<!-- select cursors -->
<g>
<path d="M435.5 164.5 L435.5 175 L437.5 173 L439 176 L440.5 175.3 L439.2 172.4 L442 172.3 Z" fill="#fff" stroke="#333" stroke-width="0.9"/>
</g>
<g transform="translate(32 0)">
<path d="M435.5 164.5 L435.5 175 L437.5 173 L439 176 L440.5 175.3 L439.2 172.4 L442 172.3 Z" fill="#fff" stroke="#333" stroke-width="0.9"/>
</g><g transform="translate(64 0)">
<path d="M435.5 164.5 L435.5 175 L437.5 173 L439 176 L440.5 175.3 L439.2 172.4 L442 172.3 Z" fill="#fff" stroke="#333" stroke-width="0.9"/>
</g>
<circle cx="430.5" cy="161.5" r="3.2" fill="none" stroke="#111" stroke-width="1"/>
<rect x="429.5" y="160.5" width="2" height="2" fill="none" stroke="#111" stroke-width="0.9"/>
<path d="M459.5 166 L466.5 159 L468 160.5 L461 167.5 Z" fill="#fff" stroke="#000" stroke-width="1.1"/>
<path d="M489.5 163.5 L494 158.5 L501.5 158.5 L497 163.5 Z" fill="#fff" stroke="#111" stroke-width="1"/>
<!-- cubes -->
<g fill="none" stroke="#9c9ca0" stroke-width="1">
<g fill="none" stroke="#9c9ca0" stroke-width="1">
<rect x="519.5" y="162.5" width="15" height="15"/>
<rect x="523.5" y="158.5" width="15" height="15"/>
<path d="M519.5 162.5 L523.5 158.5 M534.5 162.5 L538.5 158.5 M519.5 177.5 L523.5 173.5 M534.5 177.5 L538.5 173.5"/>
</g>
</g>
<g transform="translate(32 0)" fill="none" stroke="#9c9ca0" stroke-width="1">
<rect x="519.5" y="162.5" width="15" height="15"/>
<rect x="523.5" y="158.5" width="15" height="15"/>
<path d="M519.5 162.5 L523.5 158.5 M534.5 162.5 L538.5 158.5 M519.5 177.5 L523.5 173.5 M534.5 177.5 L538.5 173.5"/>
</g><g transform="translate(64 0)" fill="none" stroke="#9c9ca0" stroke-width="1">
<rect x="519.5" y="162.5" width="15" height="15"/>
<rect x="523.5" y="158.5" width="15" height="15"/>
<path d="M519.5 162.5 L523.5 158.5 M534.5 162.5 L538.5 158.5 M519.5 177.5 L523.5 173.5 M534.5 177.5 L538.5 173.5"/>
</g><g transform="translate(96 0)" fill="none" stroke="#9c9ca0" stroke-width="1">
<rect x="519.5" y="162.5" width="15" height="15"/>
<rect x="523.5" y="158.5" width="15" height="15"/>
<path d="M519.5 162.5 L523.5 158.5 M534.5 162.5 L538.5 158.5 M519.5 177.5 L523.5 173.5 M534.5 177.5 L538.5 173.5"/>
</g><g transform="translate(160 0)" fill="none" stroke="#9c9ca0" stroke-width="1">
<rect x="519.5" y="162.5" width="15" height="15"/>
<rect x="523.5" y="158.5" width="15" height="15"/>
<path d="M519.5 162.5 L523.5 158.5 M534.5 162.5 L538.5 158.5 M519.5 177.5 L523.5 173.5 M534.5 177.5 L538.5 173.5"/>
</g>
<rect x="520" y="163" width="14" height="14" fill="#84e462"/>
<path d="M552 162 L556 158 L570 158 L566 162 Z" fill="#8ce86a"/>
<path d="M584 163 L587 159.5 L587 173.5 L584 177 Z" fill="#8ce86a"/>
<path d="M631 163 L634 163 L634 177 L631 177 Z" fill="#8ce86a"/>
<rect x="680" y="163" width="14" height="14" fill="#8ce86a"/>
<g transform="translate(244 -1)">
<path d="M435.5 164.5 L435.5 175 L437.5 173 L439 176 L440.5 175.3 L439.2 172.4 L442 172.3 Z" fill="#fff" stroke="#333" stroke-width="0.9"/>
</g>
<!-- iso box -->
<path d="M648.5 165 L655 159 L667 162.5 L667 174 L660 179 L648.5 175.5 Z" fill="#f0faea" stroke="#a8a8ac" stroke-width="1"/>
<path d="M648.5 165 L660 168.5 L667 162.5 M660 168.5 L660 179" fill="none" stroke="#a8a8ac" stroke-width="1"/>
<path d="M660.5 169 L666.5 163.5 L666.5 173.8 L660.5 178.5 Z" fill="#e4f4dc"/>
<!-- list -->
<path d="M712.5 156 L719.5 156 L716 159.5 Z" fill="#6a6a70"/>
<rect x="711.5" y="161.5" width="19" height="16" fill="#fff" stroke="#9a9aa0" stroke-width="1"/>
<path d="M714 164.5 H728 M714 166.5 H728 M714 168.5 H728 M714 170.5 H728 M714 172.5 H728 M714 174.5 H728" stroke="#8a8a90" stroke-width="0.8"/>
<!-- L shape -->
<path d="M744.5 162 L747.5 159.5 L751.5 159.5 L751.5 168.5 L760 168.5 L762.5 171 L762.5 174 L758.5 176.5 L744.5 176.5 Z" fill="#c8e0f0" stroke="#2a6aa8" stroke-width="1.2"/>
<path d="M744.5 162 L748.5 162 L748.5 172 L758.5 172 L762.5 168.5 M748.5 162 L751.5 159.5 M748.5 172 L758.5 176.5" fill="none" stroke="#2a6aa8" stroke-width="1"/>
<path d="M745.5 163 L747.5 163 L747.5 175.5 L745.5 175.5 Z" fill="#80b8e0"/>
<!-- yellow box -->
<path d="M775.5 163.5 L779 160.5 L796 160.5 L796 174 L792.5 177 L775.5 177 Z" fill="none" stroke="#b8b8bc" stroke-width="1"/>
<path d="M775.5 163.5 L792.5 163.5 L796 160.5 M792.5 163.5 L792.5 177" fill="none" stroke="#b8b8bc" stroke-width="1"/>
<path d="M775.5 169.5 L779 167 L796 167 L796 174 L792.5 177 L775.5 177 Z" fill="#f5e84a" stroke="#a09428" stroke-width="1"/>
<path d="M775.5 169.5 L792.5 169.5 L796 167 M792.5 169.5 L792.5 177" fill="none" stroke="#a09428" stroke-width="1"/>
<!-- x box -->
<path d="M810 158 L820 166 M820 158 L810 166" stroke="#9a9aa0" stroke-width="2.4"/>
<path d="M807.5 171 L810.5 168 L828 168 L828 175 L825 178 L807.5 178 Z M807.5 171 L825 171 L828 168 M825 171 L825 178" fill="none" stroke="#a8a8ac" stroke-width="1"/>
<!-- grid -->
<rect x="841.5" y="160.5" width="14" height="14" fill="none" stroke="#a0a0a6" stroke-width="0.8" stroke-dasharray="1 1.2"/>
<path d="M848.5 160.5 V174.5 M841.5 167.5 H855.5" stroke="#222" stroke-width="1"/>
<!-- arrow box -->
<path d="M870.5 163.5 L877 163.5 M870.5 163.5 L870.5 176.5 L886.5 176.5 L886.5 170" fill="none" stroke="#3a80c0" stroke-width="1.2"/>
<path d="M871 164 H877 V166 H871 Z" fill="#3a80c0" opacity="0.6"/>
<path d="M877.5 169.5 L887 160 L884 158.5 L891.5 158.5 L891.5 166 L890 163 L880.5 172.5 Z" fill="#fff" stroke="#3a80c0" stroke-width="1.1"/>
<!-- mdi buttons -->
<rect x="945" y="162" width="11" height="2" fill="#505056"/>
<path d="M978.5 155 L978.5 153.5 L988.5 153.5 L988.5 162 L987.5 162" fill="none" stroke="#505056" stroke-width="1"/>
<rect x="976.5" y="156" width="10.5" height="7.5" fill="none" stroke="#505056" stroke-width="1"/>
<rect x="976" y="155.5" width="11.5" height="1.6" fill="#505056"/>
<path d="M1010 154.5 L1018 162.5 M1018 154.5 L1010 162.5" stroke="#fff" stroke-width="1.5"/>
<!-- sketch shape -->
<path d="M483 268 L849.5 403 L818 516.7 A55 55 0 0 1 765 557 L538 557 A55 55 0 0 1 483 502 Z" fill="none" stroke="#f266f6" stroke-width="2"/>
<!-- cursor -->
<path d="M471.5 285.5 L471.5 301.5 L475.5 297.8 L478.5 304.5 L481 303.4 L478.2 296.8 L483 296.5 Z" fill="#fff" stroke="#000" stroke-width="1" stroke-linejoin="miter"/>
<!-- axis triad -->
<line x1="363" y1="652" x2="363" y2="617" stroke="#3ce23c" stroke-width="1.5"/>
<path d="M360.5 629 L363 621 L365.5 629 Z" fill="#3ce23c"/>
<path d="M360 611 L363 615 L366 611 M363 615 L363 618" stroke="#6ee66e" stroke-width="1.2" fill="none"/>
<line x1="363" y1="652.5" x2="392" y2="652.5" stroke="#e02030" stroke-width="1.5"/>
<path d="M386 650 L394 652.5 L386 655 Z" fill="#e02030"/>
<path d="M397.5 648 L403.5 657.5 M403.5 648 L397.5 657.5" stroke="#e83040" stroke-width="1.1" fill="none"/>
<path d="M360.5 647.5 L365 647.5 L360.5 657.5 L365.5 657.5" stroke="#2020c0" stroke-width="1.2" fill="none"/>
<circle cx="363" cy="652.5" r="1.8" fill="#1010a0"/>

<!-- left edge ticks -->
<path d="M1 82.5 H8 M1 164.5 H8 M1 328.5 H8 M1 410.5 H8 M1 492.5 H8 M1 656.5 H8" stroke="#3a3a3a" stroke-width="1"/>
<path d="M1 246.5 H8 M1 574.5 H8" stroke="#8a8a8e" stroke-width="1"/>
<!-- resize grip -->
<g fill="#a8a8ac">
<rect x="1027" y="723" width="2" height="2"/>
<rect x="1024" y="726" width="2" height="2"/><rect x="1027" y="726" width="2" height="2"/>
<rect x="1021" y="729" width="2" height="2"/><rect x="1024" y="729" width="2" height="2"/><rect x="1027" y="729" width="2" height="2"/>
</g>
</svg>
</body></html>
